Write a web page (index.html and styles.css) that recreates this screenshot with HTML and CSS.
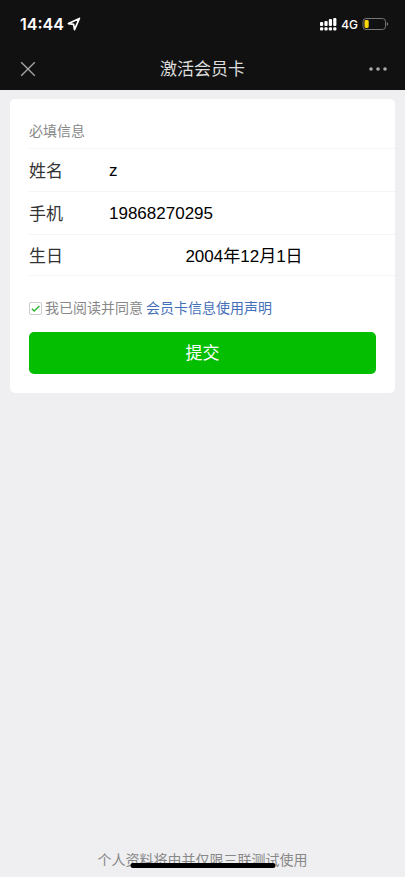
FILE: index.html
```html
<!DOCTYPE html>
<html lang="zh-CN">
<head>
<meta charset="utf-8">
<meta name="viewport" content="width=device-width, initial-scale=1">
<title>激活会员卡</title>
<link rel="stylesheet" href="styles.css">
</head>
<body>
<header class="top">
  <div class="status">
    <div class="status-group status-left">
      <span class="time">14:44</span>
      <svg width="14" height="14" viewBox="0 0 14 14" aria-hidden="true"><path d="M12.4 1.4 1.4 6.6l5.2.8.9 5.2z" fill="none" stroke="#fff" stroke-width="1.7" stroke-linejoin="round"/></svg>
    </div>
    <div class="status-group">
      <svg width="18" height="14" viewBox="0 0 18 14" fill="#fff" aria-hidden="true">
        <rect x="1" y="5" width="3.2" height="4" rx="1"/><rect x="5.4" y="4" width="3.2" height="5" rx="1"/><rect x="9.8" y="2" width="3.2" height="7" rx="1"/><rect x="14.2" y="1" width="3.2" height="8" rx="1"/>
        <rect x="1" y="10.2" width="3.2" height="3.2" rx="1"/><rect x="5.4" y="10.2" width="3.2" height="3.2" rx="1"/><rect x="9.8" y="10.2" width="3.2" height="3.2" rx="1"/><rect x="14.2" y="10.2" width="3.2" height="3.2" rx="1"/>
      </svg>
      <span class="network">4G</span>
      <svg width="27" height="14" viewBox="0 0 27 14" aria-hidden="true"><rect x="1" y="1.5" width="22.5" height="11" rx="3" fill="none" stroke="#777"/><rect x="2.5" y="3" width="4.2" height="8" rx="1.4" fill="#ffd60a"/><path d="M24.8 5v4q1.4-.6 1.4-2t-1.4-2z" fill="#777"/></svg>
    </div>
  </div>
  <nav class="nav">
    <button class="icon-button" type="button" aria-label="关闭"><svg width="16" height="16" viewBox="0 0 16 16"><path d="M1.2 1.2l13.6 13.6m0-13.6l-13.6 13.6" stroke="#aaa" stroke-width="1.3"/></svg></button>
    <h1 class="title">激活会员卡</h1>
    <button class="icon-button" type="button" aria-label="更多"><svg width="18" height="16" viewBox="0 0 18 16" fill="#aaa"><circle cx="2" cy="8" r="1.8"/><circle cx="9" cy="8" r="1.8"/><circle cx="16" cy="8" r="1.8"/></svg></button>
  </nav>
</header>
<main class="content">
  <form class="card">
    <h2 class="section">必填信息</h2>
    <div class="row"><label for="name">姓名</label><input id="name" type="text" value="z"></div>
    <div class="row"><label for="phone">手机</label><input id="phone" type="tel" value="19868270295"></div>
    <div class="row row-last"><label for="birthday">生日</label><input class="date" id="birthday" type="text" value="2004年12月1日"></div>
    <div class="agree">
      <input class="check" id="agree" type="checkbox" checked>
      <svg class="tick" width="13" height="13" viewBox="0 0 13 13" aria-hidden="true"><path d="M2.8 6.8 5.2 9 10.4 4" fill="none" stroke="#2fb52f" stroke-width="1.4"/></svg>
      <label for="agree">我已阅读并同意</label>
      <a href="#terms">会员卡信息使用声明</a>
    </div>
    <button class="submit" type="submit">提交</button>
  </form>
</main>
<footer class="foot">个人资料将由并仅限三联测试使用<span class="home-bar"></span></footer>
</body>
</html>
```
FILE: styles.css
```css
* {
  box-sizing: border-box;
}

body {
  margin: 0;
  min-height: 100vh;
  display: flex;
  flex-direction: column;
  background: #efeff1;
  color: #333;
  font-family: "Liberation Sans", "Noto Sans CJK SC", sans-serif;
  font-size: 17px;
}

button,
input {
  font: inherit;
}

.top {
  background: #111;
  color: #fff;
}

.status {
  height: 48px;
  padding: 0 16px 0 20px;
  display: flex;
  align-items: center;
  justify-content: space-between;
}

.status-group {
  display: flex;
  align-items: center;
  gap: 4px;
}

.status-left {
  gap: 3px;
}

.time {
  font-family: Inter, sans-serif;
  font-size: 16px;
  font-weight: 600;
}

.network {
  font-family: Inter, sans-serif;
  font-size: 12px;
  font-weight: 500;
}

.nav {
  height: 42px;
  padding: 0 18px 0 20px;
  display: flex;
  align-items: center;
  justify-content: space-between;
}

.icon-button {
  display: flex;
  padding: 0;
  border: 0;
  background: none;
}

.title {
  margin: 0;
  padding-bottom: 3px;
  color: #ddd;
  font-size: 17px;
  font-weight: 400;
}

.content {
  flex: 1;
  padding: 9px 10px;
}

.card {
  padding: 21px 0 19px 19px;
  border-radius: 5px;
  background: #fff;
}

.section {
  margin: 0;
  padding-bottom: 6px;
  border-bottom: 1px solid #f4f4f4;
  color: #888;
  font-size: 14px;
  font-weight: 400;
  line-height: 22px;
}

.row {
  height: 43px;
  display: flex;
  align-items: center;
  border-bottom: 1px solid #f4f4f4;
}

.row-last {
  height: 41px;
}

.row label {
  width: 80px;
  padding-bottom: 2px;
}

.row input {
  flex: 1;
  min-width: 0;
  padding: 2px 0 0;
  border: 0;
  outline: 0;
  background: none;
  color: #000;
}

.row .date {
  padding: 0 16px 1px 0;
  text-align: center;
}

.agree {
  position: relative;
  margin: 20px 0 12px;
  display: flex;
  align-items: center;
  gap: 3px;
  color: #888;
  font-size: 14px;
  line-height: 24px;
}

.check {
  appearance: none;
  width: 13px;
  height: 13px;
  margin: 0;
  border: 1px solid #ccc;
  border-radius: 2px;
  background: #fff;
}

.tick {
  position: absolute;
  left: 0;
  visibility: hidden;
  pointer-events: none;
}

.check:checked + .tick {
  visibility: visible;
}

.agree a {
  color: #4470b8;
  text-decoration: none;
}

.submit {
  display: block;
  width: calc(100% - 19px);
  height: 42px;
  padding: 0 0 3px;
  border: 0;
  border-radius: 5px;
  background: #04be02;
  color: #fff;
  font-size: 17px;
}

.foot {
  position: relative;
  padding-bottom: 6px;
  color: #888;
  font-size: 14px;
  line-height: 22px;
  text-align: center;
}

.home-bar {
  position: absolute;
  bottom: 9px;
  left: 50%;
  width: 145px;
  height: 5px;
  border-radius: 3px;
  background: #000;
  transform: translateX(-50%);
}
```
